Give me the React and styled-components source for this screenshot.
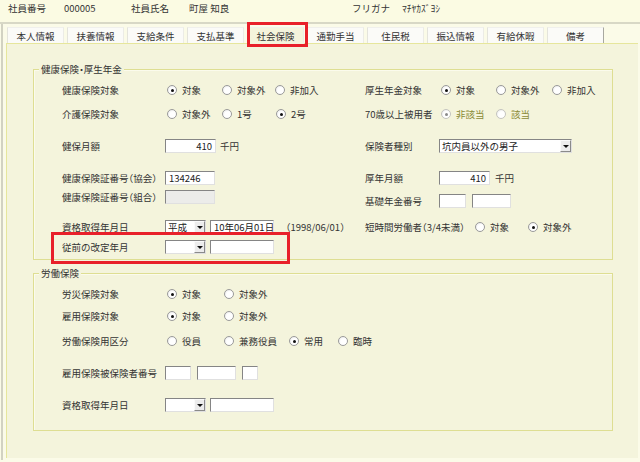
import React from 'react'
import styled, { createGlobalStyle } from 'styled-components'

const GlobalStyle = createGlobalStyle`
  html, body {
    margin: 0;
    padding: 0;
    background: #fbfbe8;
  }
  body {
    font-family: "Noto Sans CJK JP", "Noto Sans", sans-serif;
    font-size: 9.5px;
    color: #333;
    font-feature-settings: "halt";
  }
`

const Screen = styled.div`
  width: 640px;
  height: 462px;
  background: #fbfbe8;
  overflow: hidden;
`

// Header
const Header = styled.div`
  display: flex;
  align-items: flex-start;
  height: 24px;
  box-sizing: border-box;
  padding: 2px 0 0 8px;
  line-height: 12px;
  border-bottom: 2px solid #d8d8c6;
  background: #fbfbe3;
`

const HeadCell = styled.span`
  width: ${p => p.$w}px;
  flex: none;
  white-space: nowrap;
`

// Body with tabs + panel
const Body = styled.div`
  margin-left: 1px;
  border-left: 2px solid #d2d2c2;
  height: 436px;
`

const TabStrip = styled.div`
  display: flex;
  gap: 3px;
  padding: 3px 0 0 4px;
  height: 16px;
`

const Tab = styled.div`
  position: relative;
  width: 57px;
  height: ${p => (p.$active ? 17 : 16)}px;
  box-sizing: border-box;
  display: flex;
  align-items: center;
  justify-content: center;
  background: ${p => (p.$active ? '#f4f4dc' : '#fbfbf8')};
  border-top: 1px solid #f0f0ec;
  border-left: 1px solid #e4e4dc;
  border-right: 1px solid ${p => (p.$last ? '#a8a8a0' : '#ecece6')};
  z-index: ${p => (p.$active ? 2 : 0)};
  white-space: nowrap;
`

const Mark = styled.div`
  position: absolute;
  left: ${p => p.$x}px;
  top: ${p => p.$y}px;
  width: ${p => p.$w}px;
  height: ${p => p.$h}px;
  box-sizing: border-box;
  border: 3px solid #e8202a;
  pointer-events: none;
  z-index: 5;
`

const Panel = styled.div`
  margin-left: 3px;
  width: 632px;
  height: 415px;
  box-sizing: border-box;
  background: #f4f4dc;
  border-top: 1px solid #e6e69c;
  border-left: 1px solid #e6e69c;
  padding-top: 25px;
`

const Group = styled.div`
  position: relative;
  margin: ${p => p.$mt || 0}px 0 0 26px;
  width: 580px;
  box-sizing: border-box;
  border: 1px solid #dede92;
  box-shadow: inset 1px 1px 0 #fbfbec;
  padding: ${p => p.$pt}px 0 ${p => p.$pb}px 0;
`

const Legend = styled.span`
  position: absolute;
  left: 5px;
  top: -7px;
  padding: 0 2px;
  line-height: 12px;
  background: #f4f4dc;
`

const Row = styled.div`
  position: relative;
  display: grid;
  grid-template-columns: 103px 200px 74px 1fr;
  align-items: center;
  height: ${p => p.$h}px;
  margin-top: ${p => p.$mt || 0}px;
  padding-left: 28px;
`

const Label = styled.span`
  white-space: nowrap;
  line-height: 12px;
  padding-top: ${p => p.$drop || 0}px;
`

const Cell = styled.div`
  display: flex;
  align-items: center;
  gap: ${p => p.$gap || 0}px;
  padding-top: ${p => p.$drop || 0}px;
  grid-column: ${p => p.$span || 'auto'};
  white-space: nowrap;
`

const SubLabel = styled.span`
  width: ${p => p.$w}px;
  flex: none;
`

// Radio
const Option = styled.span`
  display: inline-flex;
  align-items: center;
  width: ${p => (p.$w ? `${p.$w}px` : 'auto')};
  padding-left: ${p => p.$pad ?? 2}px;
  flex: none;
  color: ${p => (p.$disabled ? '#8a8a36' : '#333')};
`

const Dot = styled.span`
  position: relative;
  width: 10px;
  height: 10px;
  box-sizing: border-box;
  margin-right: 5px;
  border-radius: 50%;
  border: 1px solid ${p => (p.$disabled ? '#c4c4c0' : '#9a9a9a')};
  background: radial-gradient(circle at 60% 60%, #ffffff 45%, #e2e2e2 100%);
  &::after {
    content: '';
    display: ${p => (p.$on ? 'block' : 'none')};
    position: absolute;
    left: 2.5px;
    top: 2.5px;
    width: 3px;
    height: 3px;
    border-radius: 50%;
    background: ${p => (p.$disabled ? '#8a8a8a' : '#111')};
  }
`

const Radio = ({ on, w, pad, disabled, children }) => (
  <Option $w={w} $pad={pad} $disabled={disabled}>
    <Dot $on={on} $disabled={disabled} />
    {children}
  </Option>
)

// Inputs
const Field = styled.div`
  width: ${p => p.$w}px;
  height: 14px;
  box-sizing: border-box;
  flex: none;
  background: ${p => (p.$disabled ? '#ececea' : '#fff')};
  border: 1px solid;
  border-color: #858585 #e0e0e0 #e0e0e0 #858585;
  padding: 0 3px;
  line-height: 12px;
  text-align: ${p => p.$align || 'left'};
  color: #222;
  overflow: hidden;
`

const Combo = styled.div`
  display: flex;
  width: ${p => p.$w}px;
  height: 14px;
  box-sizing: border-box;
  flex: none;
  background: #fff;
  border: 1px solid;
  border-color: #858585 #e0e0e0 #e0e0e0 #858585;
`

const ComboText = styled.span`
  flex: 1;
  padding-left: 2px;
  line-height: 12px;
  color: #222;
  overflow: hidden;
`

const DropButton = styled.span`
  width: 11px;
  height: 12px;
  box-sizing: border-box;
  display: flex;
  align-items: center;
  justify-content: center;
  background: #ececec;
  border: 1px solid;
  border-color: #fafafa #8a8a8a #8a8a8a #fafafa;
  &::after {
    content: '';
    border-top: 3px solid #111;
    border-left: 3px solid transparent;
    border-right: 3px solid transparent;
  }
`

const Select = ({ w, children }) => (
  <Combo $w={w}>
    <ComboText>{children}</ComboText>
    <DropButton />
  </Combo>
)

const Note = styled.span`
  margin-left: ${p => p.$ml || 0}px;
  font-feature-settings: normal;
`

const tabs = ['本人情報', '扶養情報', '支給条件', '支払基準', '社会保険', '通勤手当', '住民税', '振込情報', '有給休暇', '備考']

export default function App() {
  return (
    <Screen>
      <GlobalStyle />
      <Header>
        <HeadCell $w={56}>社員番号</HeadCell>
        <HeadCell $w={67}>000005</HeadCell>
        <HeadCell $w={58}>社員氏名</HeadCell>
        <HeadCell $w={163}>町屋 知良</HeadCell>
        <HeadCell $w={50}>フリガナ</HeadCell>
        <HeadCell $w={80}>ﾏﾁﾔｶｽﾞﾖｼ</HeadCell>
      </Header>
      <Body>
        <TabStrip>
          {tabs.map((t, i) => (
            <Tab key={t} $active={t === '社会保険'} $last={i === tabs.length - 1}>
              {t}
              {t === '社会保険' && <Mark $x={-1} $y={-6} $w={61} $h={25} />}
            </Tab>
          ))}
        </TabStrip>
        <Panel>
          <Group $pt={8} $pb={2}>
            <Legend>健康保険・厚生年金</Legend>
            <Row $h={24}>
              <Label>健康保険対象</Label>
              <Cell>
                <Radio on w={53}>対象</Radio>
                <Radio w={51}>対象外</Radio>
                <Radio>非加入</Radio>
              </Cell>
              <Label>厚生年金対象</Label>
              <Cell>
                <Radio on w={53}>対象</Radio>
                <Radio w={54}>対象外</Radio>
                <Radio>非加入</Radio>
              </Cell>
            </Row>
            <Row $h={24}>
              <Label>介護保険対象</Label>
              <Cell>
                <Radio w={53}>対象外</Radio>
                <Radio w={52}>1号</Radio>
                <Radio on>2号</Radio>
              </Cell>
              <Label>70歳以上被用者</Label>
              <Cell>
                <Radio on disabled w={53}>非該当</Radio>
                <Radio disabled>該当</Radio>
              </Cell>
            </Row>
            <Row $h={24} $mt={8}>
              <Label>健保月額</Label>
              <Cell $gap={4}>
                <Field $w={51} $align="right">410</Field>
                千円
              </Cell>
              <Label>保険者種別</Label>
              <Cell>
                <Select w={133}>坑内員以外の男子</Select>
              </Cell>
            </Row>
            <Row $h={16} $mt={12}>
              <Label>健康保険証番号（協会）</Label>
              <Cell>
                <Field $w={50}>134246</Field>
              </Cell>
              <Label>厚年月額</Label>
              <Cell $gap={5}>
                <Field $w={51} $align="right">410</Field>
                千円
              </Cell>
            </Row>
            <Row $h={16}>
              <Label>健康保険証番号（組合）</Label>
              <Cell>
                <Field $w={50} $disabled />
              </Cell>
              <Label $drop={8}>基礎年金番号</Label>
              <Cell $gap={6} $drop={8}>
                <Field $w={27} />
                <Field $w={39} />
              </Cell>
            </Row>
            <Row $h={20} $mt={15}>
              <Label>資格取得年月日</Label>
              <Cell $gap={4}>
                <Select w={41}>平成</Select>
                <Field $w={64}>10年06月01日</Field>
                <Note $ml={3}>（1998/06/01）</Note>
              </Cell>
              <Cell $span="3 / 5">
                <SubLabel $w={110}>短時間労働者（3/4未満）</SubLabel>
                <Radio w={53} pad={0}>対象</Radio>
                <Radio on pad={0}>対象外</Radio>
              </Cell>
            </Row>
            <Row $h={20}>
              <Label>従前の改定年月</Label>
              <Cell $gap={4}>
                <Select w={41} />
                <Field $w={64} />
              </Cell>
              <Mark $x={17} $y={-5} $w={239} $h={32} />
            </Row>
          </Group>
          <Group $mt={13} $pt={9} $pb={14}>
            <Legend>労働保険</Legend>
            <Row $h={22}>
              <Label>労災保険対象</Label>
              <Cell>
                <Radio on w={55}>対象</Radio>
                <Radio>対象外</Radio>
              </Cell>
            </Row>
            <Row $h={22}>
              <Label>雇用保険対象</Label>
              <Cell>
                <Radio on w={55}>対象</Radio>
                <Radio>対象外</Radio>
              </Cell>
            </Row>
            <Row $h={22} $mt={3}>
              <Label>労働保険用区分</Label>
              <Cell $span="2 / 5">
                <Radio w={55}>役員</Radio>
                <Radio w={63}>兼務役員</Radio>
                <Radio on w={47}>常用</Radio>
                <Radio>臨時</Radio>
              </Cell>
            </Row>
            <Row $h={22} $mt={10}>
              <Label>雇用保険被保険者番号</Label>
              <Cell $gap={6}>
                <Field $w={26} />
                <Field $w={39} />
                <Field $w={16} />
              </Cell>
            </Row>
            <Row $h={22} $mt={10}>
              <Label>資格取得年月日</Label>
              <Cell $gap={4}>
                <Select w={41} />
                <Field $w={64} />
              </Cell>
            </Row>
          </Group>
        </Panel>
      </Body>
    </Screen>
  )
}
